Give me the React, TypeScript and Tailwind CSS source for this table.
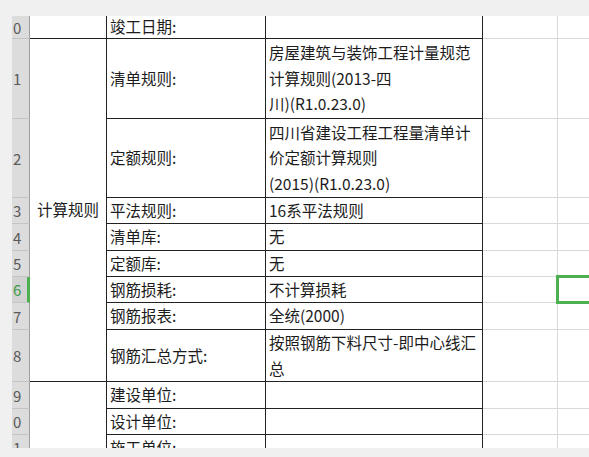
import React from "react";

type Row = {
  num: string;
  label: string;
  value: string[];
};

const rows: Row[] = [
  { num: "0", label: "竣工日期:", value: [] },
  { num: "1", label: "清单规则:", value: ["房屋建筑与装饰工程计量规范", "计算规则(2013-四", "川)(R1.0.23.0)"] },
  { num: "2", label: "定额规则:", value: ["四川省建设工程工程量清单计", "价定额计算规则", "(2015)(R1.0.23.0)"] },
  { num: "3", label: "平法规则:", value: ["16系平法规则"] },
  { num: "4", label: "清单库:", value: ["无"] },
  { num: "5", label: "定额库:", value: ["无"] },
  { num: "6", label: "钢筋损耗:", value: ["不计算损耗"] },
  { num: "7", label: "钢筋报表:", value: ["全统(2000)"] },
  { num: "8", label: "钢筋汇总方式:", value: ["按照钢筋下料尺寸-即中心线汇", "总"] },
  { num: "9", label: "建设单位:", value: [] },
  { num: "0", label: "设计单位:", value: [] },
  { num: "1", label: "施工单位:", value: [] },
];

// grid rows written out so tailwind picks them up
const rowStart = [
  "row-start-1",
  "row-start-2",
  "row-start-3",
  "row-start-4",
  "row-start-5",
  "row-start-6",
  "row-start-7",
  "row-start-8",
  "row-start-9",
  "row-start-10",
  "row-start-11",
  "row-start-12",
];

export default function App() {
  return (
    <div className="w-[589px] h-[457px] bg-[#f0f0f0] pt-[16px] pl-[12px] overflow-hidden font-['Noto_Sans_CJK_SC','Noto_Sans',sans-serif]">
      <div className="h-[432px] overflow-hidden bg-white text-[15.5px] text-[#1c1c1c]">
        <div className="grid grid-cols-[18px_77px_159px_217px_75px_60px] grid-rows-[23px_80px_79px_26px_27px_26px_26px_27px_52px_27px_26px_26px]">
          {/* merged column A cells */}
          <div className="col-start-2 row-start-1 border-b border-r border-[#222]" />
          <div className="col-start-2 row-start-2 row-span-8 flex items-center justify-center border-b border-r border-[#222]">
            计算规则
          </div>
          <div className="col-start-2 row-start-10 row-span-3 border-b border-r border-[#222]" />

          {rows.map((r, i) => {
            const selected = i === 6;
            return (
              <React.Fragment key={i}>
                <div
                  className={
                    "col-start-1 flex items-center pl-[1px] border-b border-[#c4c4c4] text-[15px] leading-none " +
                    rowStart[i] +
                    (selected
                      ? " bg-[#d2d2d2] border-r-[3px] border-r-[#4caf50] text-[#3f9a46]"
                      : " bg-[#dcdcdc] border-r border-r-[#9c9c9c] text-[#5a5a5a]")
                  }
                >
                  {r.num}
                </div>
                <div className={"col-start-3 flex items-center pl-[3px] whitespace-nowrap border-b border-r border-[#222] " + rowStart[i]}>
                  {r.label}
                </div>
                <div
                  className={
                    "col-start-4 flex flex-col justify-center pl-[3px] leading-[25.5px] whitespace-nowrap border-b border-r border-[#222] " +
                    rowStart[i]
                  }
                >
                  {r.value.map((line, j) => (
                    <div key={j}>{line}</div>
                  ))}
                </div>
                <div className={"col-start-5 border-b border-r border-[#d9d9d9] " + rowStart[i]} />
                <div className={"col-start-6 relative border-b border-[#d9d9d9] " + rowStart[i]}>
                  {selected && (
                    <div className="absolute -left-[2px] -top-[2px] w-[45px] h-[29px] border-[3px] border-[#4caf50]" />
                  )}
                </div>
              </React.Fragment>
            );
          })}
        </div>
      </div>
    </div>
  );
}
